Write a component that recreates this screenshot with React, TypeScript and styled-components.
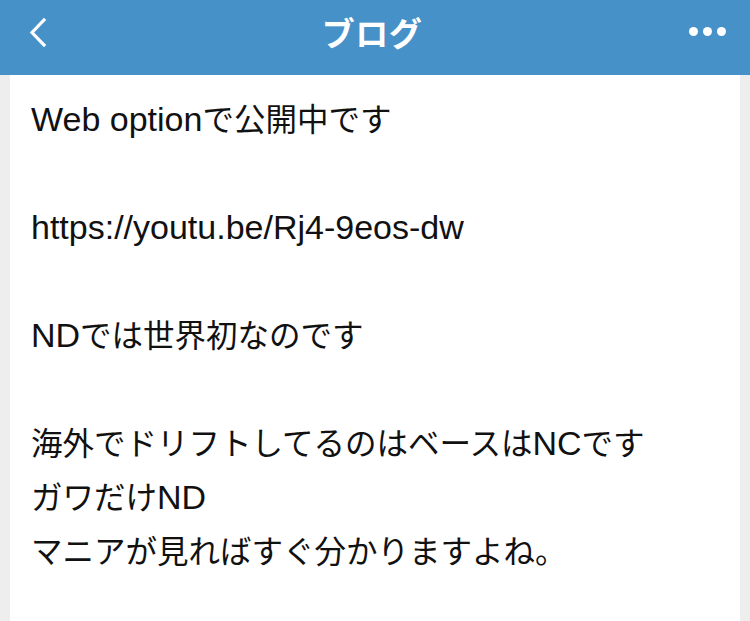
import styled, { createGlobalStyle } from "styled-components";

const GlobalStyle = createGlobalStyle`
  html, body {
    margin: 0;
    padding: 0;
    background: #eeeeee;
  }
  body {
    font-family: "Liberation Sans", "Noto Sans CJK JP", sans-serif;
  }
`;

const lines: string[] = [
  "Web optionで公開中です",
  "",
  "https://youtu.be/Rj4-9eos-dw",
  "",
  "NDでは世界初なのです",
  "",
  "海外でドリフトしてるのはベースはNCです",
  "ガワだけND",
  "マニアが見ればすぐ分かりますよね。",
];

// latin runs are set a little larger than the kana/kanji, like the original
const renderLine = (text: string) =>
  text
    .split(/([A-Za-z0-9:/.\- ]+)/)
    .filter(Boolean)
    .map((part, i) =>
      /^[A-Za-z0-9:/.\- ]+$/.test(part) ? <Latin key={i}>{part}</Latin> : <span key={i}>{part}</span>
    );

const App = () => {
  return (
    <Page>
      <GlobalStyle />
      <Header>
        <IconButton aria-label="back">
          <svg width="19" height="30" viewBox="0 0 19 30">
            <polyline
              points="16,3 4,15.5 16,28"
              fill="none"
              stroke="#ffffff"
              strokeWidth="3.2"
              strokeLinecap="square"
            />
          </svg>
        </IconButton>
        <Title>ブログ</Title>
        <IconButton aria-label="more">
          <Dots>
            <Dot />
            <Dot />
            <Dot />
          </Dots>
        </IconButton>
      </Header>
      <Content>
        {lines.map((line, i) => (
          <Line key={i}>{line ? renderLine(line) : "\u00a0"}</Line>
        ))}
      </Content>
    </Page>
  );
};

const Page = styled.div`
  width: 750px;
  min-height: 621px;
  display: flex;
  flex-direction: column;
  background: #eeeeee;
`;

const Header = styled.header`
  height: 75px;
  background: #4791c9;
  display: flex;
  align-items: center;
  justify-content: space-between;
  padding: 0 23px 0 17px;
  box-sizing: border-box;
`;

const IconButton = styled.div`
  width: 40px;
  height: 50px;
  display: flex;
  align-items: center;
  justify-content: center;
  margin-top: -12px;
`;

const Title = styled.h1`
  margin: 0 0 12px;
  color: #ffffff;
  font-family: "Noto Sans CJK JP", sans-serif;
  font-weight: 700;
  font-size: 33px;
  letter-spacing: 0.5px;
`;

const Dots = styled.div`
  display: flex;
  gap: 5px;
`;

const Dot = styled.span`
  width: 9px;
  height: 9px;
  border-radius: 50%;
  background: #ffffff;
`;

const Content = styled.main`
  flex: 1;
  margin: 0 10px;
  background: #ffffff;
  padding: 18px 21px;
`;

const Line = styled.p`
  margin: 0;
  height: 54px;
  font-size: 31.5px;
  line-height: 54px;
  color: #111111;
  white-space: nowrap;
`;

const Latin = styled.span`
  font-size: 34px;
  line-height: 1;
`;

export default App;
